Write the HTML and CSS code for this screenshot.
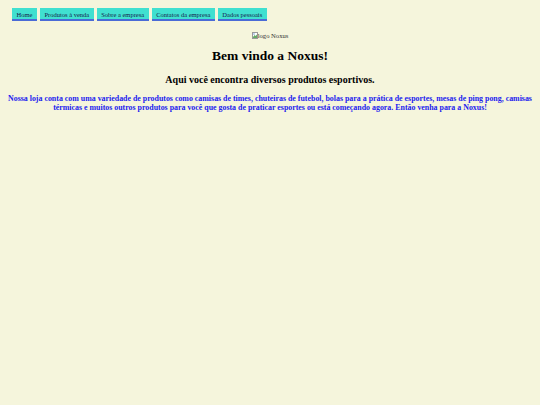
FILE: index.html
```html
<!DOCTYPE html>
<html lang="pt-BR">
<head>
<meta charset="utf-8">
<title>Noxus</title>
<link rel="stylesheet" href="styles.css">
</head>
<body>
<nav class="menu">
  <a class="menu-item" href="#">Home</a>
  <a class="menu-item" href="#">Produtos à venda</a>
  <a class="menu-item" href="#">Sobre a empresa</a>
  <a class="menu-item" href="#">Contatos da empresa</a>
  <a class="menu-item" href="#">Dados pessoais</a>
</nav>
<main class="content">
  <div class="logo"><span class="broken-img"><svg width="6" height="7" viewBox="0 0 6 7"><rect x="0.5" y="0.5" width="5" height="6" fill="#fff" stroke="#999"/><path d="M1 5 L2.5 3 L3.5 4 L5 2.5 V6 H1 Z" fill="#6a6"/><circle cx="2" cy="2" r="0.7" fill="#58c"/></svg>logo Noxus</span></div>
  <h1 class="title">Bem vindo a Noxus!</h1>
  <h2 class="subtitle">Aqui você encontra diversos produtos esportivos.</h2>
  <p class="intro">Nossa loja conta com uma variedade de produtos como camisas de times, chuteiras de futebol, bolas para a prática de esportes, mesas de ping pong, camisas térmicas e muitos outros produtos para você que gosta de praticar esportes ou está começando agora. Então venha para a Noxus!</p>
</main>
</body>
</html>
```
FILE: styles.css
```css
html, body {
  background: #f5f5dc;
}
body {
  margin: 8px;
  font-family: "Liberation Serif", "Times New Roman", serif;
  color: #000;
}
.menu {
  display: flex;
  gap: 3px;
  padding-left: 4px;
}
.menu-item {
  display: block;
  background: #40e0d0;
  color: #14204a;
  text-decoration: none;
  font-size: 6.5px;
  line-height: 9px;
  padding: 2px 4.5px 0;
  border-bottom: 2px solid #4a6bd6;
}
.content {
  text-align: center;
}
.logo {
  margin-top: 11px;
  font-size: 6.6px;
  line-height: 8px;
  color: #333;
}
.broken-img svg {
  vertical-align: -1px;
}
.title {
  font-size: 13.5px;
  margin: 7px 0 0;
  line-height: 17px;
}
.subtitle {
  font-size: 10px;
  margin: 10px 0 0;
  line-height: 12px;
}
.intro {
  color: #2222ee;
  font-weight: bold;
  font-size: 7.9px;
  line-height: 9px;
  margin: 8px 0 0;
}
```
